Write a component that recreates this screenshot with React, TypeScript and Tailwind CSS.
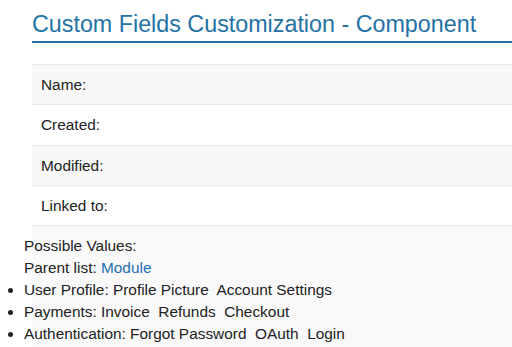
import React from "react";

const rows = ["Name:", "Created:", "Modified:", "Linked to:"];

const values = [
  { label: "User Profile:", items: ["Profile Picture", "Account Settings"] },
  { label: "Payments:", items: ["Invoice", "Refunds", "Checkout"] },
  { label: "Authentication:", items: ["Forgot Password", "OAuth", "Login"] },
];

const App = () => {
  return (
    <div className="min-h-[347px] bg-white text-[15.4px] text-[#222] font-['Liberation_Sans',Arial,sans-serif] flex flex-col">
      <h1 className="ml-[32px] pt-[10px] pb-[3px] border-b-2 border-[#2472a4] text-[23.3px] leading-[28px] text-[#2472a4]">
        Custom Fields Customization - Component
      </h1>

      <div className="ml-[32px] mt-[21px] border-t border-[#e8e8e8]">
        {rows.map((row, i) => (
          <div
            key={row}
            className={`h-[40.3px] flex items-center px-[9px] border-b border-[#e8e8e8] ${
              i % 2 === 0 ? "bg-[#f8f8f8]" : "bg-white"
            }`}
          >
            {row}
          </div>
        ))}
      </div>

      <div className="flex-1 ml-[32px] bg-[#f9f9f9] pt-[9px]">
        <div className="-ml-[8px] leading-[22px]">
          <div>Possible Values:</div>
          <div>
            Parent list: <span className="text-[#1f6fb2]">Module</span>
          </div>
          <ul className="list-disc list-outside">
            {values.map((v) => (
              <li key={v.label} className="whitespace-pre">
                {v.label} {v.items.join("  ")}
              </li>
            ))}
          </ul>
        </div>
      </div>
    </div>
  );
};

export default App;
